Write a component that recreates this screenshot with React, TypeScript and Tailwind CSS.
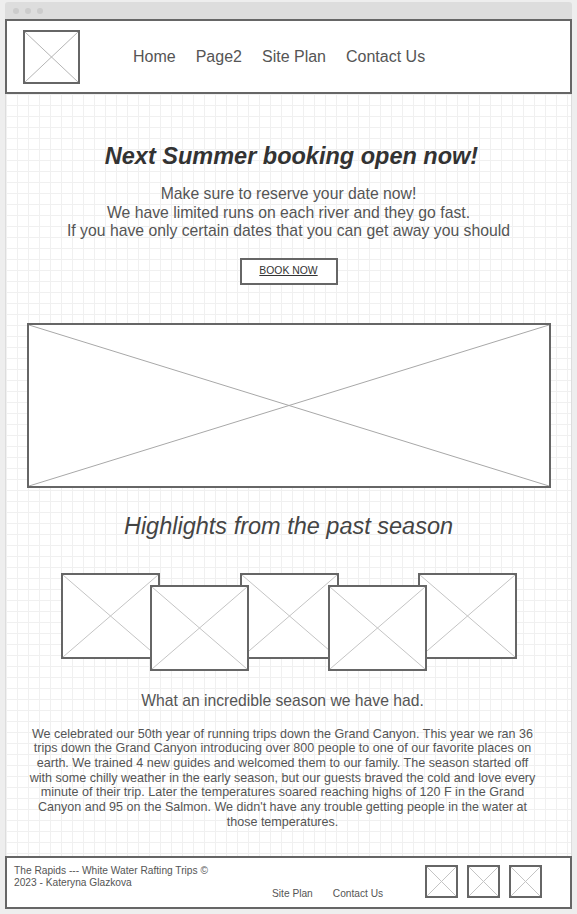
function Placeholder({ className = "", line = "#b5b5b5" }: { className?: string; line?: string }) {
  return (
    <div className={`bg-white border-2 border-[#666666] ${className}`}>
      <svg className="block w-full h-full" viewBox="0 0 100 100" preserveAspectRatio="none">
        <line x1="0" y1="0" x2="100" y2="100" stroke={line} strokeWidth="1" vectorEffect="non-scaling-stroke" />
        <line x1="100" y1="0" x2="0" y2="100" stroke={line} strokeWidth="1" vectorEffect="non-scaling-stroke" />
      </svg>
    </div>
  );
}

const navLinks = ["Home", "Page2", "Site Plan", "Contact Us"];

export default function App() {
  return (
    <div className="w-[577px] h-[914px] bg-[#eeeeee] pt-[2px] px-[5px] font-['Liberation_Sans',Arial,sans-serif] text-[#555555]">
      <div className="flex flex-col">
        <div className="h-[17px] bg-[#dddddd] rounded-t-[3px] flex items-center gap-[6px] pl-[8px]">
          <span className="w-[6px] h-[6px] rounded-full bg-[#cccccc]" />
          <span className="w-[6px] h-[6px] rounded-full bg-[#cccccc]" />
          <span className="w-[6px] h-[6px] rounded-full bg-[#cccccc]" />
        </div>

        <header className="h-[75px] bg-white border-2 border-[#666666] flex items-center pl-[16px]">
          <Placeholder className="w-[57px] h-[54px]" />
          <nav className="flex items-center gap-[20px] ml-[53px] text-[16px] leading-[20px] text-[#555555]">
            {navLinks.map((l) => (
              <a key={l} href="#">
                {l}
              </a>
            ))}
          </nav>
        </header>

        <main className="h-[762px] border-x border-[#dddddd] bg-white bg-[linear-gradient(to_right,#f0f0f0_1px,transparent_1px),linear-gradient(to_bottom,#f0f0f0_1px,transparent_1px)] bg-[size:11px_11px] flex flex-col items-center pt-[49px]">
          <h1 className="text-[23.5px] leading-[27px] font-bold italic text-[#333333] pl-[6px]">
            Next Summer booking open now!
          </h1>
          <p className="mt-[15px] text-[15.75px] leading-[18.5px] text-center text-[#555555]">
            Make sure to reserve your date now!
            <br />
            We have limited runs on each river and they go fast.
            <br />
            If you have only certain dates that you can get away you should
          </p>
          <button className="mt-[17px] w-[98px] h-[27px] border-2 border-[#666666] bg-white text-[10.4px] text-[#333333] underline">
            BOOK NOW
          </button>

          <Placeholder className="mt-[38px] w-[524px] h-[165px] border-[#555555]" line="#a8a8a8" />

          <h2 className="mt-[25px] text-[23.5px] leading-[27px] italic text-[#444444]">
            Highlights from the past season
          </h2>

          <div className="mt-[33px] flex items-start">
            <Placeholder className="w-[99px] h-[86px]" line="#c4c4c4" />
            <Placeholder className="relative z-10 -ml-[10px] mt-[12px] w-[99px] h-[86px]" line="#c4c4c4" />
            <Placeholder className="-ml-[9px] w-[99px] h-[86px]" line="#c4c4c4" />
            <Placeholder className="relative z-10 -ml-[11px] mt-[12px] w-[99px] h-[86px]" line="#c4c4c4" />
            <Placeholder className="-ml-[9px] w-[99px] h-[86px]" line="#c4c4c4" />
          </div>

          <p className="mt-[21px] mr-[12px] text-[15.7px] leading-[18px] text-[#555555]">
            What an incredible season we have had.
          </p>
          <p className="mt-[17px] w-[506px] mr-[12px] text-[12.55px] leading-[14.7px] text-center text-[#555555]">
            We celebrated our 50th year of running trips down the Grand Canyon. This year we ran 36 trips down the
            Grand Canyon introducing over 800 people to one of our favorite places on earth. We trained 4 new guides
            and welcomed them to our family. The season started off with some chilly weather in the early season, but
            our guests braved the cold and love every minute of their trip. Later the temperatures soared reaching
            highs of 120 F in the Grand Canyon and 95 on the Salmon. We didn't have any trouble getting people in the
            water at those temperatures.
          </p>
        </main>

        <footer className="h-[53px] bg-white border-2 border-[#666666] flex items-start pl-[7px] pt-[7px] pr-[28px]">
          <div className="w-[258px] text-[10.2px] leading-[12px] text-[#555555]">
            The Rapids --- White Water Rafting Trips ©
            <br />
            2023 - Kateryna Glazkova
          </div>
          <div className="mt-[23px] flex gap-[20px] text-[10.2px] leading-[12px] text-[#555555]">
            <a href="#">Site Plan</a>
            <a href="#">Contact Us</a>
          </div>
          <div className="ml-auto flex gap-[9px]">
            <Placeholder className="w-[33px] h-[33px]" line="#c4c4c4" />
            <Placeholder className="w-[33px] h-[33px]" line="#c4c4c4" />
            <Placeholder className="w-[33px] h-[33px]" line="#c4c4c4" />
          </div>
        </footer>
      </div>
    </div>
  );
}
